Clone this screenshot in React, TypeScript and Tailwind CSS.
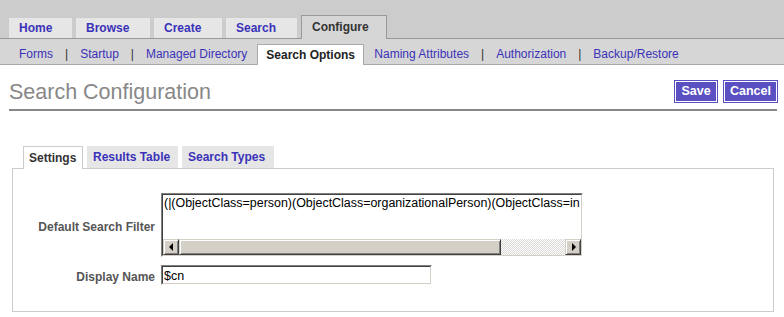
import React from "react";

const LINK = "text-[#3a32b8]";

function ScrollBtn({ dir }: { dir: "left" | "right" }) {
  return (
    <div className="w-[16px] h-[16px] shrink-0 bg-[#d4d0c8] border border-t-[#d4d0c8] border-l-[#d4d0c8] border-b-[#404040] border-r-[#404040] shadow-[inset_1px_1px_0_#ffffff,inset_-1px_-1px_0_#808080] flex items-center justify-center">
      {dir === "left" ? (
        <div className="w-0 h-0 border-y-[4px] border-y-transparent border-r-[4px] border-r-black" />
      ) : (
        <div className="w-0 h-0 border-y-[4px] border-y-transparent border-l-[4px] border-l-black ml-[1px]" />
      )}
    </div>
  );
}

function Sunken({ className, children }: { className: string; children: React.ReactNode }) {
  return (
    <div className={`${className} border border-t-[#808080] border-l-[#808080] border-b-white border-r-white`}>
      <div className="h-full border border-t-[#404040] border-l-[#404040] border-b-[#d4d0c8] border-r-[#d4d0c8] flex flex-col bg-white">
        {children}
      </div>
    </div>
  );
}

function Sep() {
  return <span className="ml-[12px] mr-[12px] h-[20px] leading-[20px] text-[#333]">|</span>;
}

export default function App() {
  return (
    <div className="w-[784px] h-[317px] bg-white overflow-hidden font-['Liberation_Sans',Arial,sans-serif]">
      {/* top tabs */}
      <div className="h-[39px] bg-[#cccccc] border-b border-[#999999] flex items-end pl-[9px] gap-[4px] text-[12px] font-bold">
        <div className={`w-[63px] h-[20px] bg-[#e6e6e6] pl-[10px] leading-[20px] ${LINK}`}>Home</div>
        <div className={`w-[74px] h-[20px] bg-[#e6e6e6] pl-[10px] leading-[20px] ${LINK}`}>Browse</div>
        <div className={`w-[68px] h-[20px] bg-[#e6e6e6] pl-[10px] leading-[20px] ${LINK}`}>Create</div>
        <div className={`w-[71px] h-[20px] bg-[#e6e6e6] pl-[10px] leading-[20px] ${LINK}`}>Search</div>
        <div className="w-[86px] h-[24px] -mb-px relative bg-[#d6d6d6] border border-b-0 border-[#999999] pl-[10px] leading-[23px] text-[#333333]">
          Configure
        </div>
      </div>

      {/* sub nav */}
      <div className="h-[26px] bg-[#d6d6d6] border-b border-[#aaaaaa] flex items-end pl-[19px] text-[12px]">
        <span className={`h-[20px] leading-[20px] ${LINK}`}>Forms</span>
        <Sep />
        <span className={`h-[20px] leading-[20px] ${LINK}`}>Startup</span>
        <Sep />
        <span className={`h-[20px] leading-[20px] ${LINK}`}>Managed Directory</span>
        <div className="h-[21px] -mb-px relative ml-[10px] mr-[10px] w-[107px] bg-white border border-b-0 border-[#aaaaaa] pl-[8px] leading-[20px] font-bold text-[#222222]">
          Search Options
        </div>
        <span className={`h-[20px] leading-[20px] ${LINK}`}>Naming Attributes</span>
        <Sep />
        <span className={`h-[20px] leading-[20px] ${LINK}`}>Authorization</span>
        <Sep />
        <span className={`h-[20px] leading-[20px] ${LINK}`}>Backup/Restore</span>
      </div>

      {/* title row */}
      <div className="mt-[15px] ml-[9px] mr-[7px] flex justify-between items-start border-b-2 border-[#888888] pb-[5px]">
        <div className="h-[24px] leading-[24px] text-[21.5px] text-[#888888]">Search Configuration</div>
        <div className="flex gap-[5px] -mr-[1px]">
          <button className="w-[44px] h-[23px] bg-[#5a50c2] border border-[#5a50c2] shadow-[inset_0_0_0_1px_#ffffff] text-white font-bold text-[12.5px] leading-[19px]">
            Save
          </button>
          <button className="w-[55px] h-[23px] bg-[#5a50c2] border border-[#5a50c2] shadow-[inset_0_0_0_1px_#ffffff] text-white font-bold text-[12.5px] leading-[19px]">
            Cancel
          </button>
        </div>
      </div>

      {/* sub tabs + box */}
      <div className="mt-[35px] ml-[12px] mr-[10px]">
        <div className="flex items-end pl-[11px] gap-[4px] text-[12px] font-bold">
          <div className="w-[60px] h-[23px] -mb-px relative z-10 bg-white border border-b-0 border-[#cccccc] pl-[5px] leading-[22px] text-[#333333]">
            Settings
          </div>
          <div className={`w-[91px] h-[22px] bg-[#e6e6e6] pl-[6px] leading-[22px] ${LINK}`}>Results Table</div>
          <div className={`w-[92px] h-[22px] bg-[#e6e6e6] pl-[6px] leading-[22px] ${LINK}`}>Search Types</div>
        </div>
        <div className="border border-[#cccccc] pt-[24px] pb-[25px]">
          <div className="grid grid-cols-[142px_auto] gap-x-[6px] gap-y-[7px] items-center">
            <div className="text-right text-[12px] font-bold text-[#555555] pt-[4px]">Default Search Filter</div>
            <Sunken className="w-[422px] h-[64px]">
              <div className="flex-1 overflow-hidden whitespace-nowrap text-[12.45px] leading-[14px] pt-[1px] pl-[1px] text-black">
                (|(ObjectClass=person)(ObjectClass=organizationalPerson)(ObjectClass=in
              </div>
              <div className="h-[16px] flex bg-[image:repeating-conic-gradient(#dcdad6_0_25%,#ffffff_0_50%)] bg-[length:2px_2px]">
                <ScrollBtn dir="left" />
                <div className="w-[322px] h-[16px] shrink-0 bg-[#d4d0c8] border border-t-[#d4d0c8] border-l-[#d4d0c8] border-b-[#404040] border-r-[#404040] shadow-[inset_1px_1px_0_#ffffff,inset_-1px_-1px_0_#808080]" />
                <div className="flex-1" />
                <ScrollBtn dir="right" />
              </div>
            </Sunken>
            <div className="text-right text-[12px] font-bold text-[#555555] pt-[4px]">Display Name</div>
            <Sunken className="w-[271px] h-[20px]">
              <div className="text-[12.5px] leading-[16px] pt-[1px] pl-[1px] text-black whitespace-nowrap">$cn</div>
            </Sunken>
          </div>
        </div>
      </div>
    </div>
  );
}
